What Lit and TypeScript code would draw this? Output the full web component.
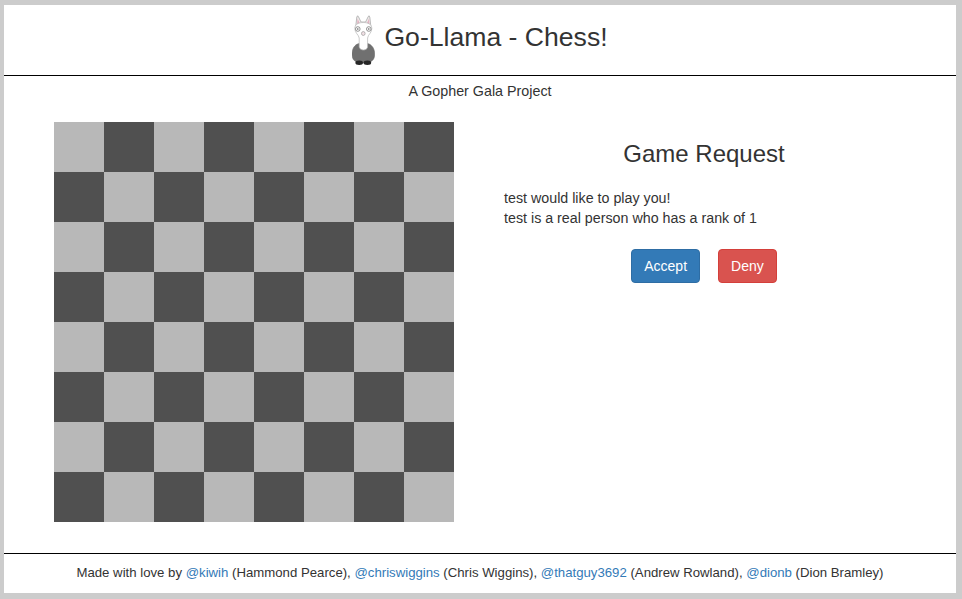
import { LitElement, html, css, svg } from "lit";
import { customElement } from "lit/decorators.js";

const llama = svg`
<svg class="llama" width="23" height="50" viewBox="0 0 23 50" aria-hidden="true">
  <path d="M3.8 11 L4.8 2 Q5.6 -0.5 6.6 2 L9 7 L13.6 7 L16 2 Q17 -0.5 17.8 2 L18.8 11 Z" fill="#efecec" stroke="#a0a0a0" stroke-width="0.7"/>
  <path d="M5 10 L5.6 3.5 L7.8 8.5 Z M17.6 10 L17 3.5 L14.8 8.5 Z" fill="#e2b4c2"/>
  <path d="M7 28.5 C2.5 29.5 0 34 0 39 C0 45 3 48 11.3 48 C19.6 48 22.7 45 22.7 39 C22.7 34 20 29.5 15.6 28.5 Z" fill="#707070" stroke="#676767" stroke-width="0.5"/>
  <path d="M2.8 13.5 C2.8 9 7 7.5 11.3 7.5 C15.6 7.5 19.8 9 19.8 13.5 C19.8 18 16 19.5 15.6 23 L15.6 32 C15 36 8 36 7.2 32 L7.2 23 C6.6 19.5 2.8 18 2.8 13.5 Z" fill="#fff" stroke="#b4b4b4" stroke-width="0.7"/>
  <circle cx="5.8" cy="14" r="2.3" fill="#fff" stroke="#777" stroke-width="0.8"/>
  <circle cx="16.8" cy="14" r="2.3" fill="#fff" stroke="#777" stroke-width="0.8"/>
  <circle cx="5.8" cy="14" r="0.8" fill="#555"/>
  <circle cx="16.8" cy="14" r="0.8" fill="#555"/>
  <ellipse cx="11.3" cy="18.5" rx="1.8" ry="2" fill="#f0dfe4" stroke="#8f8f8f" stroke-width="0.6"/>
  <ellipse cx="7.2" cy="47.8" rx="3.8" ry="2.2" fill="#262626"/>
  <ellipse cx="15.4" cy="47.8" rx="3.8" ry="2.2" fill="#262626"/>
</svg>`;

@customElement("app-root")
export class AppRoot extends LitElement {
  static styles = css`
    :host {
      display: block;
      height: 599px;
      box-sizing: border-box;
      padding: 5px 6px 6px 4px;
      background: #cccccc;
      font-family: "Liberation Sans", Arial, sans-serif;
      font-size: 14px;
      line-height: 20px;
      color: #333333;
    }
    .page {
      height: 100%;
      display: flex;
      flex-direction: column;
      background: #ffffff;
    }
    header {
      height: 71px;
      flex: none;
      box-sizing: border-box;
      border-bottom: 1px solid #000000;
      display: flex;
      justify-content: center;
      align-items: center;
      gap: 9px;
    }
    .llama {
      display: block;
      flex: none;
    }
    h1 {
      margin: 0 0 6px;
      font-size: 26.6px;
      font-weight: 400;
      line-height: 30px;
    }
    .subtitle {
      flex: none;
      margin-top: 5px;
      font-size: 14.3px;
      text-align: center;
    }
    main {
      flex: 1;
      display: flex;
      padding: 21px 50px 0;
      gap: 50px;
    }
    .board {
      display: grid;
      grid-template-columns: repeat(8, 50px);
      grid-auto-rows: 50px;
      flex: none;
      align-self: flex-start;
    }
    .light {
      background: #b8b8b8;
    }
    .dark {
      background: #505050;
    }
    .panel {
      width: 400px;
      flex: none;
    }
    h3 {
      margin: 19px 0 10px;
      font-size: 24px;
      font-weight: 400;
      line-height: 26px;
      text-align: center;
    }
    .message {
      margin: 21px 0 0;
      font-size: 14.28px;
    }
    .actions {
      display: flex;
      justify-content: center;
      gap: 18px;
      margin-top: 21px;
    }
    .btn {
      box-sizing: border-box;
      height: 34px;
      padding: 6px 12px;
      border: 1px solid transparent;
      border-radius: 4px;
      font: inherit;
      color: #ffffff;
    }
    .primary {
      background: #337ab7;
      border-color: #2e6da4;
    }
    .danger {
      background: #d9534f;
      border-color: #d43f3a;
    }
    footer {
      flex: none;
      height: 40px;
      box-sizing: border-box;
      border-top: 1px solid #000000;
      padding-top: 9px;
      font-size: 13.2px;
      text-align: center;
    }
    a {
      color: #337ab7;
      text-decoration: none;
    }
  `;

  render() {
    const squares = Array.from({ length: 64 }, (_, i) => {
      const r = Math.floor(i / 8);
      const c = i % 8;
      return html`<div class=${(r + c) % 2 === 0 ? "light" : "dark"}></div>`;
    });
    return html`
      <div class="page">
        <header>
          ${llama}
          <h1>Go-Llama - Chess!</h1>
        </header>
        <div class="subtitle">A Gopher Gala Project</div>
        <main>
          <div class="board">${squares}</div>
          <div class="panel">
            <h3>Game Request</h3>
            <p class="message">
              test would like to play you!<br />
              test is a real person who has a rank of 1
            </p>
            <div class="actions">
              <button class="btn primary">Accept</button>
              <button class="btn danger">Deny</button>
            </div>
          </div>
        </main>
        <footer>
          Made with love by <a href="#">@kiwih</a> (Hammond Pearce),
          <a href="#">@chriswiggins</a> (Chris Wiggins),
          <a href="#">@thatguy3692</a> (Andrew Rowland),
          <a href="#">@dionb</a> (Dion Bramley)
        </footer>
      </div>
    `;
  }
}
